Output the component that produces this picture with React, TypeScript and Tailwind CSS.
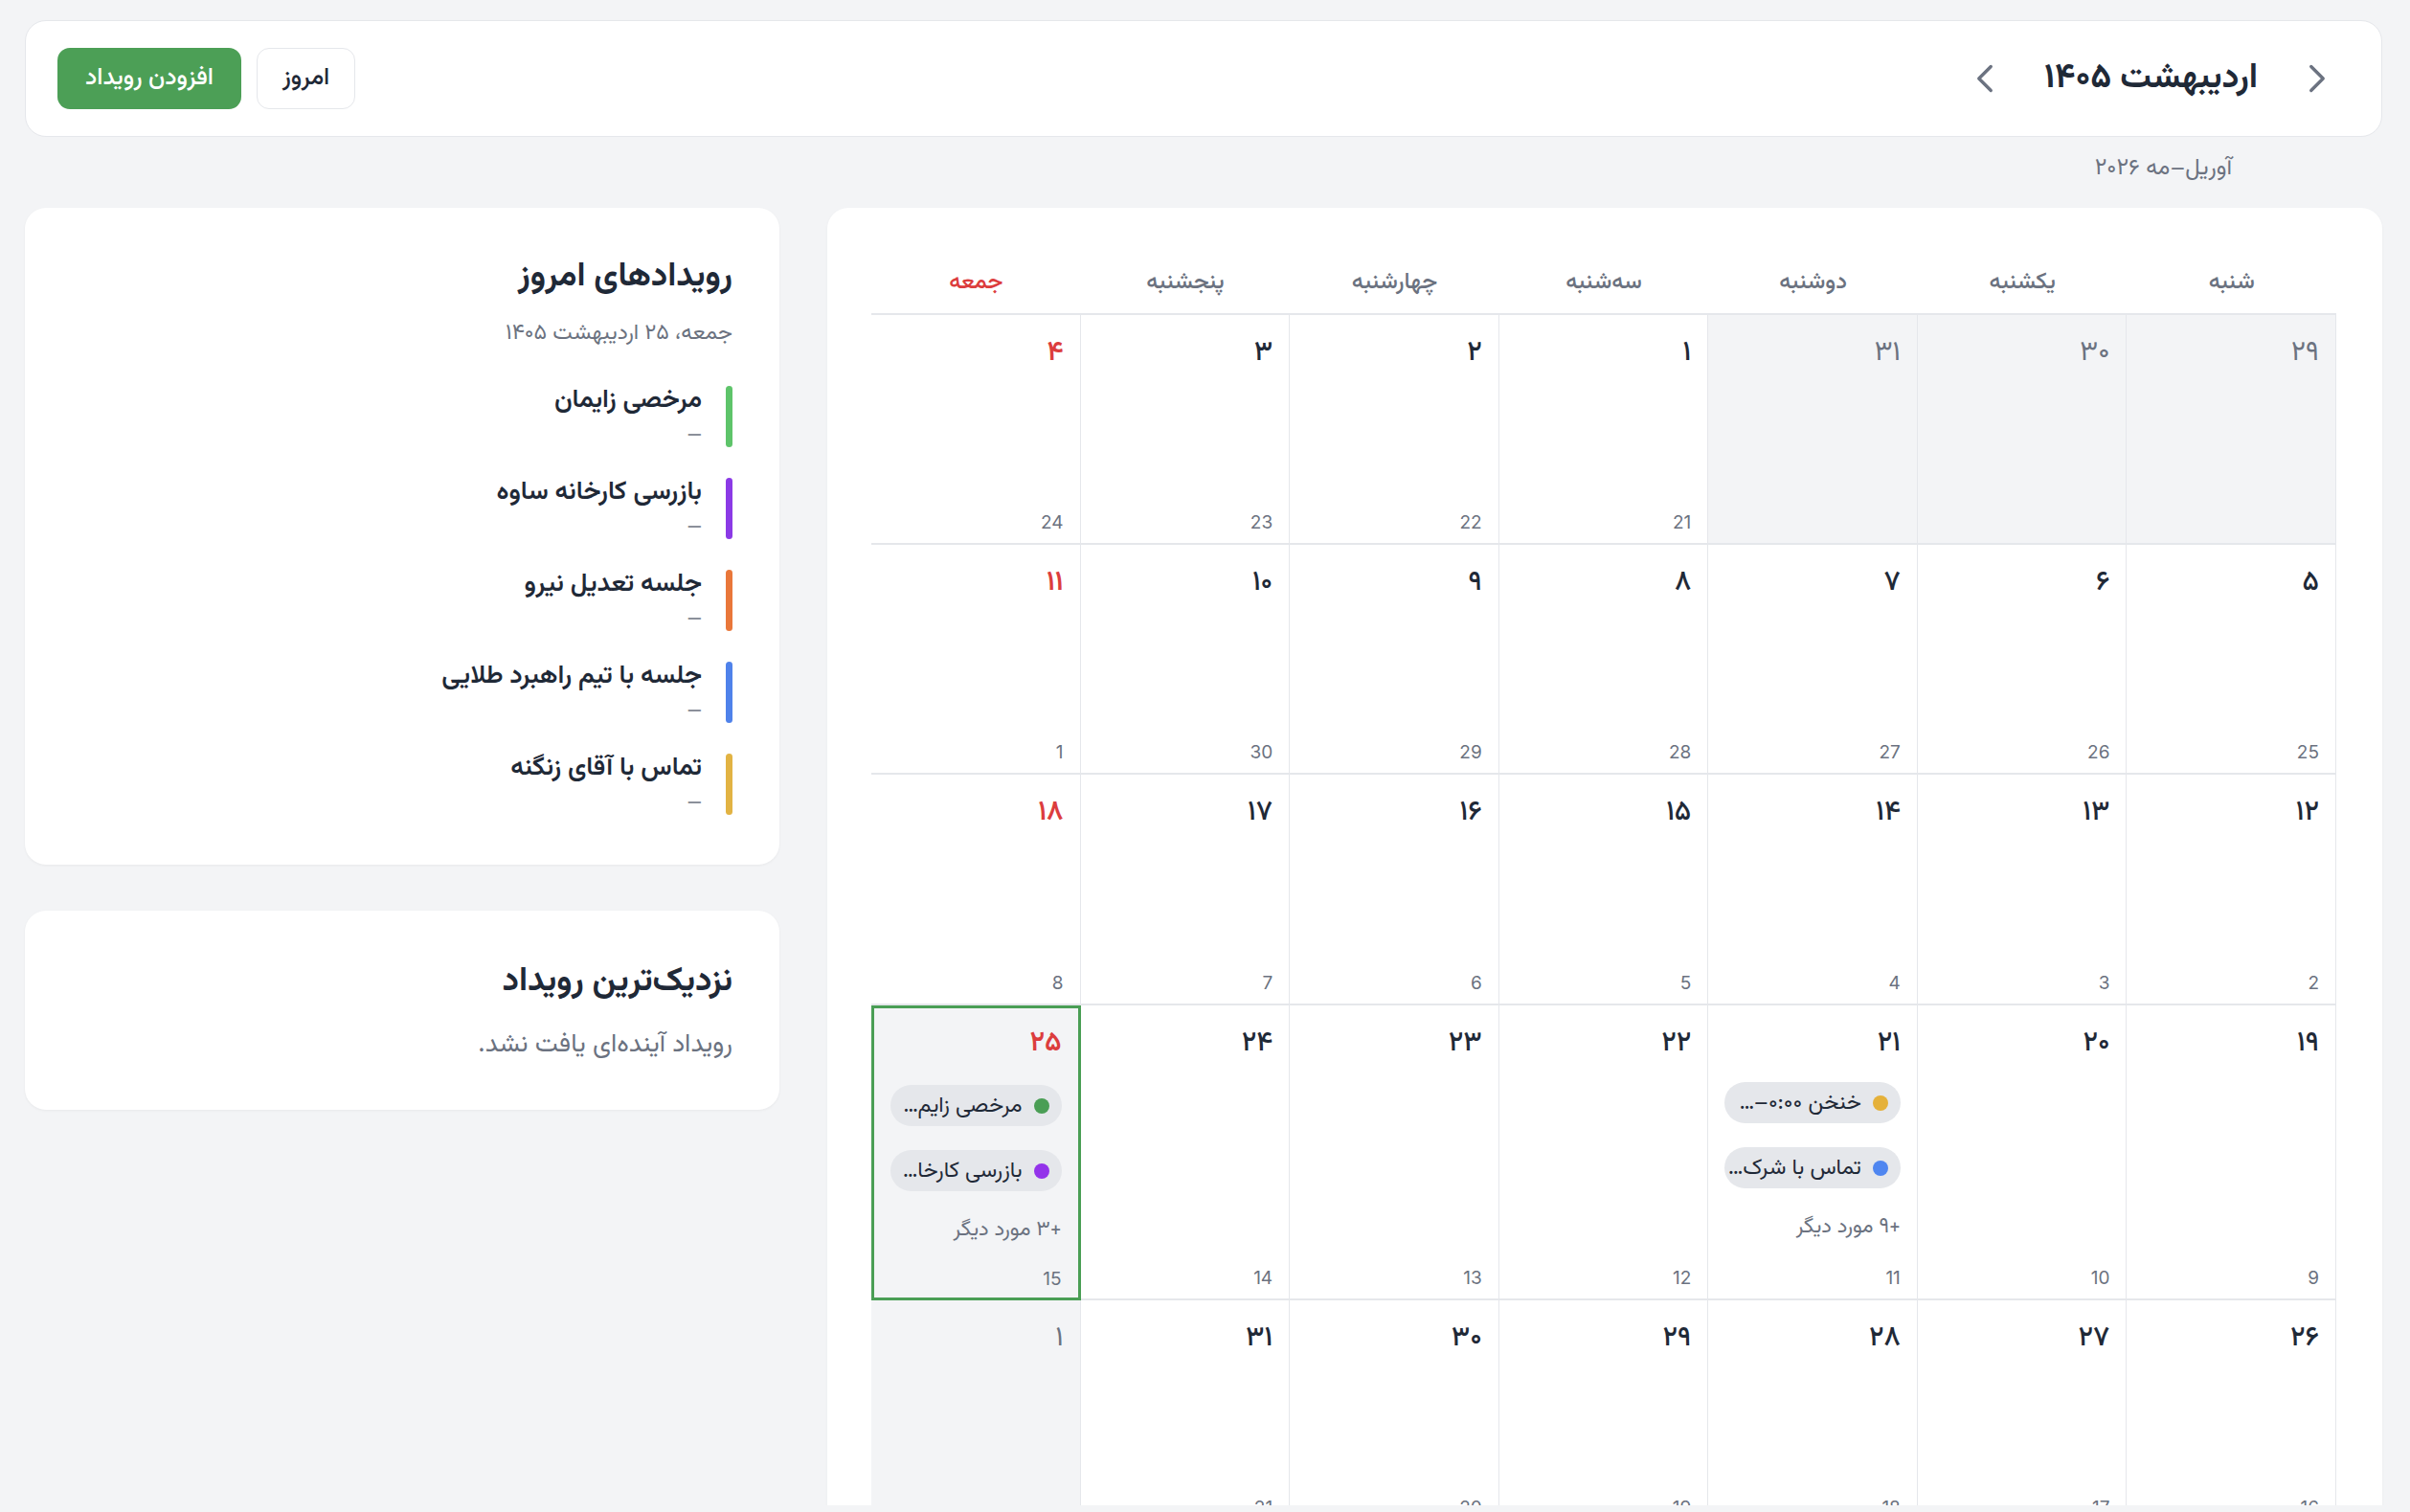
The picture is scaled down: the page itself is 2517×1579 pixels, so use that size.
import React from "react";
import { ChevronLeft, ChevronRight } from "lucide-react";

const fa = (n: number | string) =>
  String(n).replace(/\d/g, (d) => "۰۱۲۳۴۵۶۷۸۹"[Number(d)]);

type Ev = { c: string; t: string };
type Cell = {
  d: number;
  g?: number;
  out?: boolean;
  fri?: boolean;
  today?: boolean;
  events?: Ev[];
  more?: number;
};

const weekDays = ["شنبه", "یکشنبه", "دوشنبه", "سه‌شنبه", "چهارشنبه", "پنجشنبه", "جمعه"];

const rows: Cell[][] = [
  [
    { d: 29, out: true },
    { d: 30, out: true },
    { d: 31, out: true },
    { d: 1, g: 21 },
    { d: 2, g: 22 },
    { d: 3, g: 23 },
    { d: 4, g: 24, fri: true },
  ],
  [
    { d: 5, g: 25 },
    { d: 6, g: 26 },
    { d: 7, g: 27 },
    { d: 8, g: 28 },
    { d: 9, g: 29 },
    { d: 10, g: 30 },
    { d: 11, g: 1, fri: true },
  ],
  [
    { d: 12, g: 2 },
    { d: 13, g: 3 },
    { d: 14, g: 4 },
    { d: 15, g: 5 },
    { d: 16, g: 6 },
    { d: 17, g: 7 },
    { d: 18, g: 8, fri: true },
  ],
  [
    { d: 19, g: 9 },
    { d: 20, g: 10 },
    {
      d: 21,
      g: 11,
      events: [
        { c: "#e5b13a", t: "خنخن ۰:۰۰–…" },
        { c: "#4f86f0", t: "تماس با شرک…" },
      ],
      more: 9,
    },
    { d: 22, g: 12 },
    { d: 23, g: 13 },
    { d: 24, g: 14 },
    {
      d: 25,
      g: 15,
      fri: true,
      today: true,
      events: [
        { c: "#4a9e55", t: "مرخصی زایم…" },
        { c: "#9333ea", t: "بازرسی کارخا…" },
      ],
      more: 3,
    },
  ],
  [
    { d: 26, g: 16 },
    { d: 27, g: 17 },
    { d: 28, g: 18 },
    { d: 29, g: 19 },
    { d: 30, g: 20 },
    { d: 31, g: 21 },
    { d: 1, out: true, fri: true },
  ],
];

const todayEvents = [
  { c: "#5ec46a", t: "مرخصی زایمان" },
  { c: "#8b3ae6", t: "بازرسی کارخانه ساوه" },
  { c: "#e9773a", t: "جلسه تعدیل نیرو" },
  { c: "#4f82ea", t: "جلسه با تیم راهبرد طلایی" },
  { c: "#e2b343", t: "تماس با آقای زنگنه" },
];

function DayCell({ cell }: { cell: Cell }) {
  let cls = "flex flex-col min-w-0 ";
  if (cell.today) {
    cls += "border-[3px] border-[#4a9e55] bg-[#f3f4f6] px-[17px] pt-[19px] pb-[7px]";
  } else {
    cls +=
      "border-r-[1.5px] border-b-[2.5px] border-[#e5e7eb] px-[17px] pt-[22px] pb-[9px] " +
      (cell.out ? "bg-[#f3f4f6]" : "bg-white");
  }
  const numColor = cell.out
    ? "text-[#6b7280] font-normal"
    : cell.fri
    ? "text-[#dc3d3d] font-semibold"
    : "text-[#1f2937] font-medium";
  return (
    <div className={cls}>
      <div className={"text-[29px] leading-[36px] " + numColor}>{fa(cell.d)}</div>
      {cell.events && (
        <div className={(cell.today ? "mt-[25px]" : "mt-[22px]") + " flex flex-col gap-[25px]"}>
          {cell.events.map((e, i) => (
            <div
              key={i}
              className="flex h-[43px] items-center gap-[12px] overflow-hidden whitespace-nowrap rounded-full bg-[#e5e7eb] pr-[13px] pl-[6px]"
            >
              <span className="h-[16px] w-[16px] shrink-0 rounded-full" style={{ backgroundColor: e.c }} />
              <span className="text-[23px] leading-[30px] text-[#1f2937]">{e.t}</span>
            </div>
          ))}
        </div>
      )}
      {cell.more !== undefined && (
        <div className="mt-[26px] text-[22px] leading-[30px] text-[#6b7280]">
          {"+" + fa(cell.more) + " مورد دیگر"}
        </div>
      )}
      {cell.g !== undefined && (
        <div className="mt-auto font-['Inter','Roboto',sans-serif] text-[19px] leading-[24px] text-[#6b7280]">
          {cell.g}
        </div>
      )}
    </div>
  );
}

export default function App() {
  return (
    <div
      dir="rtl"
      className="flex h-[1579px] w-full flex-col overflow-hidden bg-[#f3f4f6] font-['Vazirmatn','Noto_Sans_Arabic','Noto_Naskh_Arabic','DejaVu_Sans',sans-serif]"
    >
      <div className="h-[1572px] overflow-hidden pl-[26px] pr-[29px] pt-[21px]">
        {/* Header */}
        <div className="flex h-[122px] items-center justify-between rounded-[22px] border-[1.5px] border-[#e5e7eb] bg-white px-[33px]">
          <div className="flex items-center gap-[28px]">
            <button className="flex h-[64px] w-[68px] items-center justify-center text-[#6b7280]">
              <ChevronRight size={50} strokeWidth={1.6} />
            </button>
            <div className="text-[36px] font-bold leading-[46px] text-[#1f2937]">اردیبهشت ۱۴۰۵</div>
            <button className="flex h-[64px] w-[68px] items-center justify-center text-[#6b7280]">
              <ChevronLeft size={50} strokeWidth={1.6} />
            </button>
          </div>
          <div className="flex items-center gap-[16px]">
            <button className="flex h-[64px] items-center rounded-[13px] border-[1.5px] border-[#e5e7eb] bg-white px-[26px] text-[25px] font-medium text-[#1f2937]">
              امروز
            </button>
            <button className="flex h-[64px] items-center rounded-[13px] bg-[#4c9f56] px-[29px] text-[25px] font-medium text-white">
              افزودن رویداد
            </button>
          </div>
        </div>

        {/* Subtitle */}
        <div className="mt-[18px] flex h-[30px] items-center">
          <div className="mr-[157px] text-[24px] leading-[30px] text-[#6b7280]">آوریل–مه ۲۰۲۶</div>
        </div>

        {/* Content */}
        <div className="mt-[26px] flex items-start gap-[50px]">
          {/* Calendar */}
          <div className="min-w-0 flex-1 rounded-[22px] bg-white pl-[46px] pr-[48px] pt-[40px] shadow-[0_1px_3px_rgba(0,0,0,0.04)]">
            <div className="grid h-[72px] grid-cols-7 border-b-[2.5px] border-[#e5e7eb] pt-[5px]">
              {weekDays.map((w, i) => (
                <div
                  key={w}
                  className={
                    "flex items-center justify-center text-[24px] font-medium " +
                    (i === 6 ? "text-[#dc3d3d]" : "text-[#6b7280]")
                  }
                >
                  {w}
                </div>
              ))}
            </div>
            <div className="grid grid-cols-7 grid-rows-[240px_240px_241px_308px_240px]">
              {rows.flat().map((c, i) => (
                <DayCell key={i} cell={c} />
              ))}
            </div>
          </div>

          {/* Sidebar */}
          <div className="flex w-[788px] shrink-0 flex-col gap-[48px]">
            <div className="rounded-[22px] bg-white pb-[52px] pl-[49px] pr-[49px] pt-[50px] shadow-[0_1px_3px_rgba(0,0,0,0.05)]">
              <div className="text-[35px] font-bold leading-[46px] text-[#1f2937]">رویدادهای امروز</div>
              <div className="mt-[19px] text-[23px] leading-[32px] text-[#6b7280]">جمعه، ۲۵ اردیبهشت ۱۴۰۵</div>
              <div className="mt-[39px] flex flex-col gap-[32px]">
                {todayEvents.map((e) => (
                  <div key={e.t} className="flex h-[64px] items-stretch gap-[25px]">
                    <span className="w-[7px] shrink-0 rounded-full" style={{ backgroundColor: e.c }} />
                    <div className="flex flex-col justify-between">
                      <div className="text-[27px] font-semibold leading-[32px] text-[#1f2937]">{e.t}</div>
                      <div className="text-[20px] font-semibold leading-[26px] text-[#8b909a]">—</div>
                    </div>
                  </div>
                ))}
              </div>
            </div>
            <div className="rounded-[22px] bg-white pb-[49px] pl-[49px] pr-[49px] pt-[52px] shadow-[0_1px_3px_rgba(0,0,0,0.05)]">
              <div className="text-[35px] font-bold leading-[46px] text-[#1f2937]">نزدیک‌ترین رویداد</div>
              <div className="mt-[24px] text-[27px] leading-[37px] text-[#6b7280]">رویداد آینده‌ای یافت نشد.</div>
            </div>
          </div>
        </div>
      </div>
      <div className="h-[7px] bg-[#f3f4f6]" />
    </div>
  );
}
